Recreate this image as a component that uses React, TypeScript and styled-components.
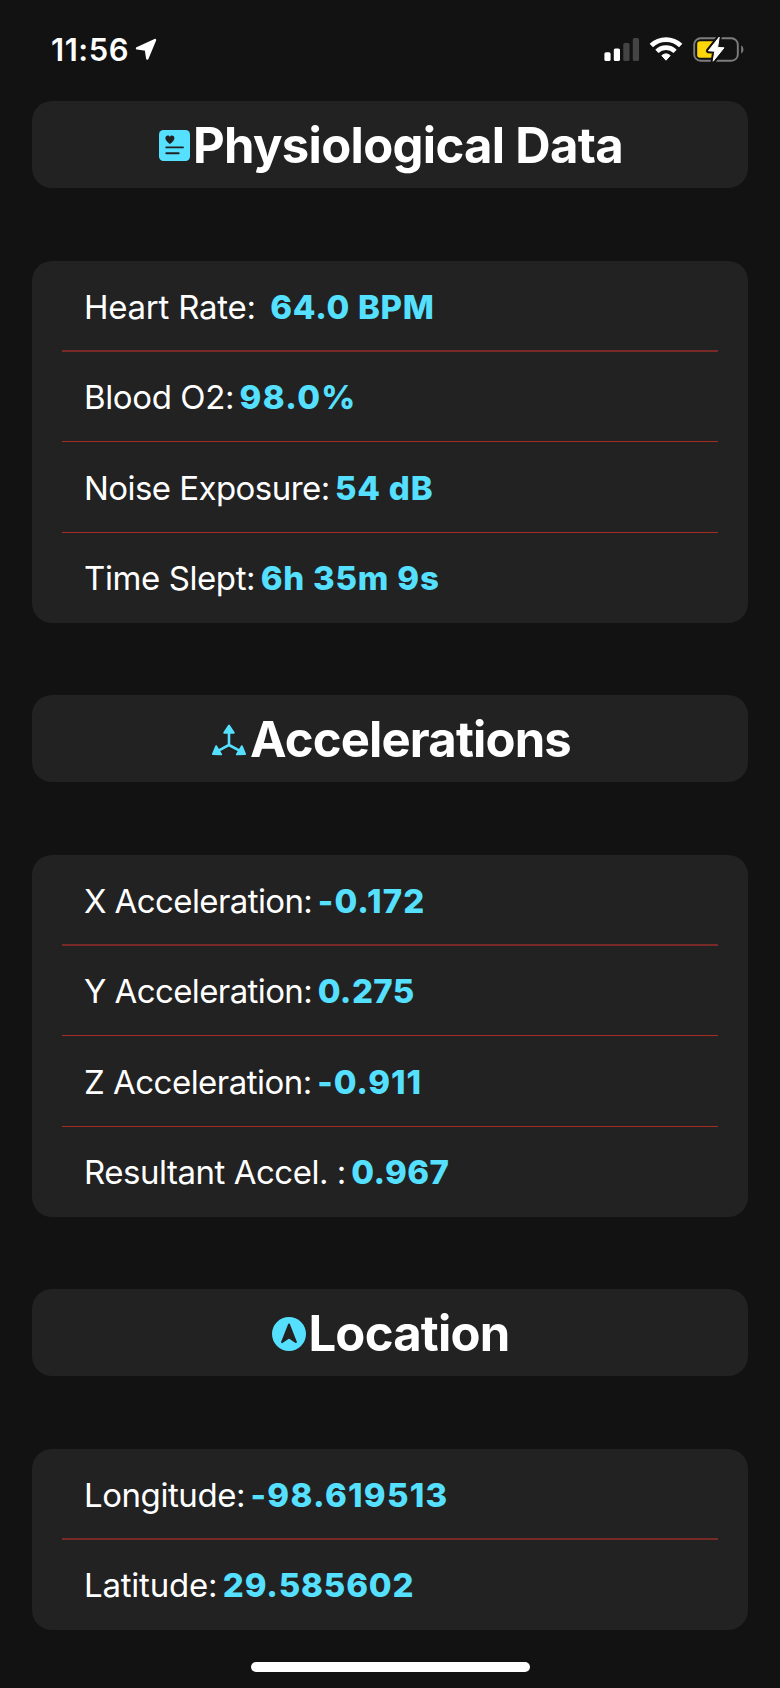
import React from "react";
import styled, { createGlobalStyle } from "styled-components";

const ACCENT = "#55e0ff";
const PAGE = "#121212";
const CARD = "#222222";

const GlobalStyle = createGlobalStyle`
  * { box-sizing: border-box; }
  html, body { margin: 0; background: ${PAGE}; }
  body { font-family: Inter, "Liberation Sans", sans-serif; color: #fff; }
`;

const Screen = styled.div`
  width: 780px;
  height: 1688px;
  display: flex;
  flex-direction: column;
  overflow: hidden;
  background: ${PAGE};
`;

const StatusBar = styled.header`
  height: 101px;
  padding: 34px 36px 0 51px;
  display: flex;
  align-items: flex-start;
  justify-content: space-between;
`;

const ClockGroup = styled.div`
  display: flex;
  align-items: flex-start;
  gap: 6px;
`;

const Clock = styled.time`
  font-size: 31px;
  font-weight: 600;
  line-height: 32px;
  letter-spacing: 0.55px;
`;

const ArrowIcon = styled.svg`
  display: block;
  margin-top: 4px;
`;

const StatusIcons = styled.svg`
  display: block;
`;

const Content = styled.main`
  flex: 1;
  padding: 0 32px;
  display: flex;
  flex-direction: column;
  gap: 72px;
`;

const Section = styled.section`
  display: flex;
  flex-direction: column;
  gap: 73px;
`;

const TitleCard = styled.div<{ $gap: number }>`
  height: 87px;
  padding: 2px 0 0 2px;
  border-radius: 20px;
  background: ${CARD};
  display: flex;
  align-items: center;
  justify-content: center;
  gap: ${(p) => p.$gap}px;

  svg {
    display: block;
    flex: none;
  }
`;

const Title = styled.h1<{ $tracking: number }>`
  margin: 0;
  font-size: 49px;
  font-weight: 700;
  line-height: 60px;
  white-space: nowrap;
  letter-spacing: ${(p) => p.$tracking}px;
`;

const List = styled.div`
  border-radius: 20px;
  background: ${CARD};
  display: flex;
  flex-direction: column;
`;

const Row = styled.div<{ $height: number; $inset: number }>`
  height: ${(p) => p.$height}px;
  padding: ${(p) => p.$inset}px 52px 0;
  display: flex;
  align-items: flex-start;
  gap: 5.5px;
  font-size: 33px;
  line-height: 40px;
  white-space: pre;
`;

const Divider = styled.div<{ $soft: boolean }>`
  height: ${(p) => (p.$soft ? 2 : 1)}px;
  margin: 0 30px;
  background: ${(p) => (p.$soft ? "#772a27" : "#a52c24")};
`;

const Label = styled.span<{ $tracking: number }>`
  font-weight: 400;
  letter-spacing: ${(p) => p.$tracking}px;
`;

const Value = styled.span<{ $tracking: number }>`
  font-weight: 800;
  color: ${ACCENT};
  letter-spacing: ${(p) => p.$tracking}px;
`;

const HomeArea = styled.footer`
  height: 26px;
  display: flex;
  justify-content: center;
`;

const HomeIndicator = styled.div`
  width: 279px;
  height: 10px;
  border-radius: 5px;
  background: #fff;
`;

const HealthCardIcon = () => (
  <svg width="31" height="31" viewBox="0 0 31 31">
    <rect width="31" height="31" rx="4.5" fill={ACCENT} />
    <path
      d="M10.9 14 C8.6 12.2 6.4 10.4 6.4 8.2 C6.4 6.7 7.5 5.6 8.8 5.6 C9.7 5.6 10.5 6.1 10.9 6.9 C11.3 6.1 12.1 5.6 13 5.6 C14.3 5.6 15.4 6.7 15.4 8.2 C15.4 10.4 13.2 12.2 10.9 14 Z"
      fill={CARD}
    />
    <path d="M7.3 17.4 H24 M7.3 23.2 H19.7" stroke={CARD} strokeWidth="1.9" strokeLinecap="round" />
  </svg>
);

const AxesIcon = () => (
  <svg width="36" height="32" viewBox="0 0 36 32">
    <path d="M18 8 V21 L8 26.4 M18 21 L28 26.4" fill="none" stroke={ACCENT} strokeWidth="2.6" />
    <path
      d="M18 1.6 L22.8 8.8 H13.2 Z M1.9 30 L5.2 22.2 L10.2 30.4 Z M34.1 30 L30.8 22.2 L25.8 30.4 Z"
      fill={ACCENT}
      stroke={ACCENT}
      strokeWidth="1.9"
      strokeLinejoin="round"
    />
  </svg>
);

const CompassIcon = () => (
  <svg width="34" height="34" viewBox="0 0 34 34">
    <circle cx="17" cy="17" r="17" fill={ACCENT} />
    <path
      d="M17 7.4 L24 25.2 L17 20.6 L10 25.2 Z"
      fill={CARD}
      stroke={CARD}
      strokeWidth="1.8"
      strokeLinejoin="round"
    />
  </svg>
);

const boltPath = "M119.2 3.2 L108.4 16.8 L114.8 17.2 L113.2 27.2 L124 13.8 L117.6 13.4 Z";

const StatusGlyphs = () => (
  <StatusIcons width="144" height="31" viewBox="0 0 144 31">
    <rect x="4.4" y="18.3" width="6.2" height="8.7" rx="1.6" fill="#fff" />
    <rect x="13.8" y="14.4" width="6.2" height="12.6" rx="1.6" fill="#fff" />
    <rect x="23.3" y="9" width="6.2" height="18" rx="1.6" fill="#444" />
    <rect x="32.8" y="4" width="6.2" height="23" rx="1.6" fill="#444" />
    <path d="M51.3 11.6 A21.2 21.2 0 0 1 80.7 11.6" fill="none" stroke="#fff" strokeWidth="4.8" />
    <path d="M56.9 17.3 A13.2 13.2 0 0 1 75.1 17.3" fill="none" stroke="#fff" strokeWidth="4.6" />
    <path
      d="M66 26.2 L61.8 21.6 A6.6 6.6 0 0 1 70.2 21.6 Z"
      fill="#fff"
      stroke="#fff"
      strokeWidth="1"
      strokeLinejoin="round"
    />
    <rect x="94.2" y="4.2" width="43.6" height="22.6" rx="6.4" fill="none" stroke="#7d7d7d" strokeWidth="1.9" />
    <path d="M141.2 11.6 C144.1 12.6 144.1 18.4 141.2 19.4 Z" fill="#7d7d7d" />
    <path d="M100 7.2 H114.5 V23.8 H100 Q97.2 23.8 97.2 21 V10 Q97.2 7.2 100 7.2 Z" fill="#ffd60a" />
    <path d={boltPath} fill={PAGE} stroke={PAGE} strokeWidth="5" strokeLinejoin="round" />
    <path d={boltPath} fill="#fff" stroke="#fff" strokeWidth="1" strokeLinejoin="round" />
  </StatusIcons>
);

type Entry = { label: string; value: string; lt: number; vt: number };

type Group = {
  title: string;
  tracking: number;
  gap: number;
  icon: React.ReactNode;
  entries: Entry[];
};

const groups: Group[] = [
  {
    title: "Physiological Data",
    tracking: -0.68,
    gap: 3,
    icon: <HealthCardIcon />,
    entries: [
      { label: "Heart Rate: ", value: "64.0 BPM", lt: -0.25, vt: 0.72 },
      { label: "Blood O2:", value: "98.0%", lt: -0.38, vt: 1.29 },
      { label: "Noise Exposure:", value: "54 dB", lt: -0.56, vt: 0.78 },
      { label: "Time Slept:", value: "6h 35m 9s", lt: -0.41, vt: 0.81 },
    ],
  },
  {
    title: "Accelerations",
    tracking: -0.84,
    gap: 3,
    icon: <AxesIcon />,
    entries: [
      { label: "X Acceleration:", value: "-0.172", lt: -0.6, vt: 1.09 },
      { label: "Y Acceleration:", value: "0.275", lt: -0.6, vt: 0.4 },
      { label: "Z Acceleration:", value: "-0.911", lt: -0.52, vt: 0.88 },
      { label: "Resultant Accel. :", value: "0.967", lt: -0.48, vt: 0.4 },
    ],
  },
  {
    title: "Location",
    tracking: -0.77,
    gap: 2,
    icon: <CompassIcon />,
    entries: [
      { label: "Longitude:", value: "-98.619513", lt: -0.44, vt: 1.27 },
      { label: "Latitude:", value: "29.585602", lt: -0.22, vt: 0.84 },
    ],
  },
];

export default function App() {
  return (
    <>
      <GlobalStyle />
      <Screen>
        <StatusBar>
          <ClockGroup>
            <Clock>11:56</Clock>
            <ArrowIcon width="22" height="23" viewBox="0 0 22 23">
              <path
                d="M20 2 L12.3 20.6 L10.9 11.6 L2 10.3 Z"
                fill="#fff"
                stroke="#fff"
                strokeWidth="2.4"
                strokeLinejoin="round"
              />
            </ArrowIcon>
          </ClockGroup>
          <StatusGlyphs />
        </StatusBar>
        <Content>
          {groups.map((group) => (
            <Section key={group.title}>
              <TitleCard $gap={group.gap}>
                {group.icon}
                <Title $tracking={group.tracking}>{group.title}</Title>
              </TitleCard>
              <List>
                {group.entries.map((entry, i) => (
                  <React.Fragment key={entry.label}>
                    {i > 0 && <Divider $soft={i === 1} />}
                    <Row
                      $height={i === 0 || (i === 1 && group.entries.length > 2) ? 89 : 90}
                      $inset={i % 2 === 1 ? 25 : 26}
                    >
                      <Label $tracking={entry.lt}>{entry.label}</Label>
                      <Value $tracking={entry.vt}>{entry.value}</Value>
                    </Row>
                  </React.Fragment>
                ))}
              </List>
            </Section>
          ))}
        </Content>
        <HomeArea>
          <HomeIndicator />
        </HomeArea>
      </Screen>
    </>
  );
}
